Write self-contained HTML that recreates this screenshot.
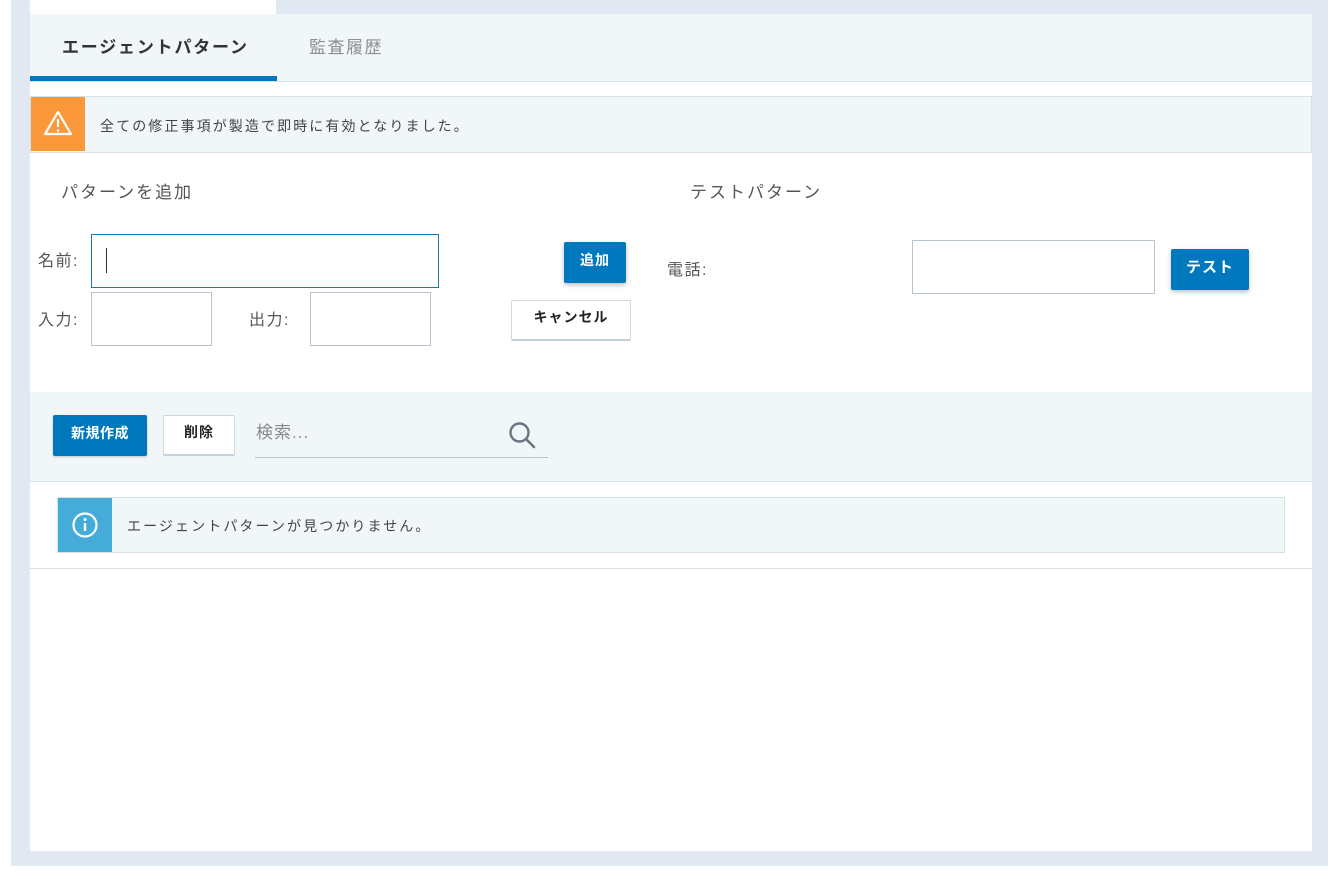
<!DOCTYPE html>
<html><head><meta charset="utf-8"><style>
*{box-sizing:border-box;margin:0;padding:0}
body{width:1340px;height:879px;background:#fff;position:relative;overflow:hidden;font-family:"Liberation Sans","Noto Sans CJK JP",sans-serif;color:#444}
.a{position:absolute}
.btnp{position:absolute;background:#0078be;color:#fff;font-weight:bold;font-size:14px;border-radius:2px;display:flex;align-items:center;justify-content:center;box-shadow:0 2px 5px rgba(0,0,0,.25);padding-bottom:6px;letter-spacing:1px}
.btns{position:absolute;background:#fff;color:#222;font-weight:bold;font-size:14px;border:1px solid #cfd8e0;border-bottom:2px solid #c6d0da;border-radius:2px;display:flex;align-items:center;justify-content:center;padding-bottom:6px;letter-spacing:1px}
.inp{position:absolute;border:1px solid #b8c5d0;background:#fff}
.lbl{position:absolute;font-size:16px;color:#555;letter-spacing:1.5px}
</style></head><body>
<div class="a" style="left:11px;top:0;width:1317px;height:866px;background:#e1e8f1"></div>
<div class="a" style="left:30px;top:0;width:246px;height:14px;background:#fff"></div>
<div class="a" style="left:30px;top:14px;width:1282px;height:837px;background:#fff"></div>
<div class="a" style="left:30px;top:14px;width:1282px;height:68px;background:#f1f6f9;border-bottom:1px solid #d6e0e8"></div>
<div class="a" style="left:30px;top:76px;width:247px;height:5px;background:#0078be"></div>
<div class="a" style="left:62px;top:33px;font-size:17px;font-weight:bold;color:#333;letter-spacing:1.8px">エージェントパターン</div>
<div class="a" style="left:309px;top:33px;font-size:17px;color:#8a8f94;letter-spacing:1.5px">監査履歴</div>
<div class="a" style="left:30px;top:96px;width:1282px;height:57px;background:#f1f6f9;border:1px solid #d6e0e8"></div>
<div class="a" style="left:31px;top:97px;width:54px;height:54px;background:#fb983a"></div>
<svg class="a" style="left:43px;top:110px" width="30" height="26" viewBox="0 0 30 26"><path d="M15 2 L28 24 H2 Z" fill="none" stroke="#fff" stroke-width="2.2" stroke-linejoin="round"/><line x1="15" y1="9" x2="15" y2="17" stroke="#fff" stroke-width="2.2"/><circle cx="15" cy="20.5" r="1.3" fill="#fff"/></svg>
<div class="a" style="left:100px;top:116px;font-size:14px;color:#444;letter-spacing:2.1px">全ての修正事項が製造で即時に有効となりました。</div>
<div class="a" style="left:61px;top:178px;font-size:17px;color:#555;letter-spacing:2px">パターンを追加</div>
<div class="a" style="left:690px;top:178px;font-size:17px;color:#555;letter-spacing:2px">テストパターン</div>
<div class="lbl" style="left:38px;top:247px">名前:</div>
<div class="inp" style="left:91px;top:234px;width:348px;height:54px;border-color:#1b77b0"></div>
<div class="a" style="left:106px;top:248px;width:1px;height:25px;background:#333"></div>
<div class="lbl" style="left:38px;top:306px">入力:</div>
<div class="inp" style="left:91px;top:292px;width:121px;height:54px"></div>
<div class="lbl" style="left:249px;top:306px">出力:</div>
<div class="inp" style="left:310px;top:292px;width:121px;height:54px"></div>
<div class="btnp" style="left:564px;top:242px;width:62px;height:41px">追加</div>
<div class="btns" style="left:511px;top:300px;width:120px;height:41px">キャンセル</div>
<div class="lbl" style="left:667px;top:256px">電話:</div>
<div class="inp" style="left:912px;top:240px;width:243px;height:54px"></div>
<div class="btnp" style="left:1171px;top:249px;width:78px;height:41px;font-size:15px">テスト</div>
<div class="a" style="left:30px;top:392px;width:1282px;height:90px;background:#f1f6f9;border-bottom:1px solid #d6e0e8"></div>
<div class="btnp" style="left:53px;top:415px;width:94px;height:41px;box-shadow:0 1px 2px rgba(0,0,0,.2);letter-spacing:0.5px">新規作成</div>
<div class="btns" style="left:163px;top:415px;width:72px;height:41px">削除</div>
<div class="a" style="left:256px;top:418px;font-size:17px;color:#888;letter-spacing:1px">検索...</div>
<div class="a" style="left:255px;top:457px;width:293px;height:1px;background:#b8c0c8"></div>
<svg class="a" style="left:507px;top:420px" width="30" height="30" viewBox="0 0 30 30"><circle cx="12.5" cy="12.5" r="9" fill="none" stroke="#6b7580" stroke-width="2.4"/><line x1="19" y1="19" x2="27" y2="27" stroke="#6b7580" stroke-width="2.6" stroke-linecap="round"/></svg>
<div class="a" style="left:57px;top:497px;width:1228px;height:56px;background:#f1f6f9;border:1px solid #d6e0e8"></div>
<div class="a" style="left:58px;top:498px;width:54px;height:54px;background:#45abd9"></div>
<svg class="a" style="left:71px;top:511px" width="28" height="28" viewBox="0 0 28 28"><circle cx="14" cy="14" r="11.5" fill="none" stroke="#fff" stroke-width="2.2"/><circle cx="14" cy="8.5" r="1.5" fill="#fff"/><line x1="14" y1="12" x2="14" y2="20" stroke="#fff" stroke-width="2.4"/></svg>
<div class="a" style="left:127px;top:516px;font-size:14px;color:#444;letter-spacing:2.1px">エージェントパターンが見つかりません。</div>
<div class="a" style="left:30px;top:568px;width:1282px;height:1px;background:#d6e0e8"></div>
</body></html>
